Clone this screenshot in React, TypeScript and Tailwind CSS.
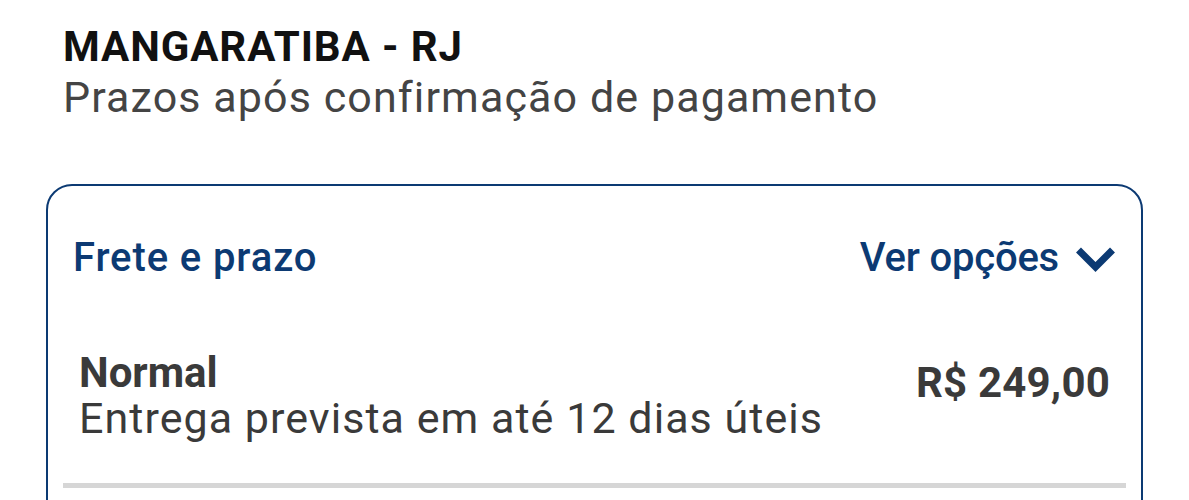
import React from "react";

export default function App() {
  return (
    <div className="w-[1189px] h-[500px] overflow-hidden bg-white font-['Roboto',sans-serif]">
      <div className="pl-[63px] pt-[22px]">
        <div className="text-[42px] leading-[50px] font-bold text-[#111] tracking-[0.9px]">MANGARATIBA - RJ</div>
        <div className="text-[43px] leading-[50px] text-[#444] tracking-[1.1px]">Prazos após confirmação de pagamento</div>
      </div>
      <div className="ml-[46px] mt-[62px] w-[1097px] h-[400px] border-2 border-[#0c3a73] rounded-[26px] px-[25px] pt-[47px]">
        <div className="flex items-center justify-between">
          <div className="text-[40px] leading-[50px] font-medium text-[#0c3a73] tracking-[0.9px]">Frete e prazo</div>
          <div className="flex items-center gap-[16px] text-[40px] leading-[50px] font-medium text-[#0c3a73] tracking-[-0.2px]">
            <span>Ver opções</span>
            <svg width="41" height="27" viewBox="0 0 41 27" fill="none" className="mt-[2px]">
              <path d="M3.5 4 L20.5 21 L37.5 4" stroke="#0c3a73" strokeWidth="7" strokeLinecap="butt" strokeLinejoin="miter" />
            </svg>
          </div>
        </div>
        <div className="mt-[66px] pl-[6px] pr-[6px] flex justify-between">
          <div>
            <div className="text-[42px] leading-[47px] font-bold text-[#3a3a3a]">Normal</div>
            <div className="text-[43px] leading-[44px] text-[#3a3a3a] tracking-[1.05px]">Entrega prevista em até 12 dias úteis</div>
          </div>
          <div className="text-[42px] leading-[45px] font-bold text-[#3a3a3a] pt-[11px] tracking-[0.2px]">R$ 249,00</div>
        </div>
        <div className="mt-[43px] -mx-[10px] h-[5px] bg-[#d6d6d6]"></div>
      </div>
    </div>
  );
}
